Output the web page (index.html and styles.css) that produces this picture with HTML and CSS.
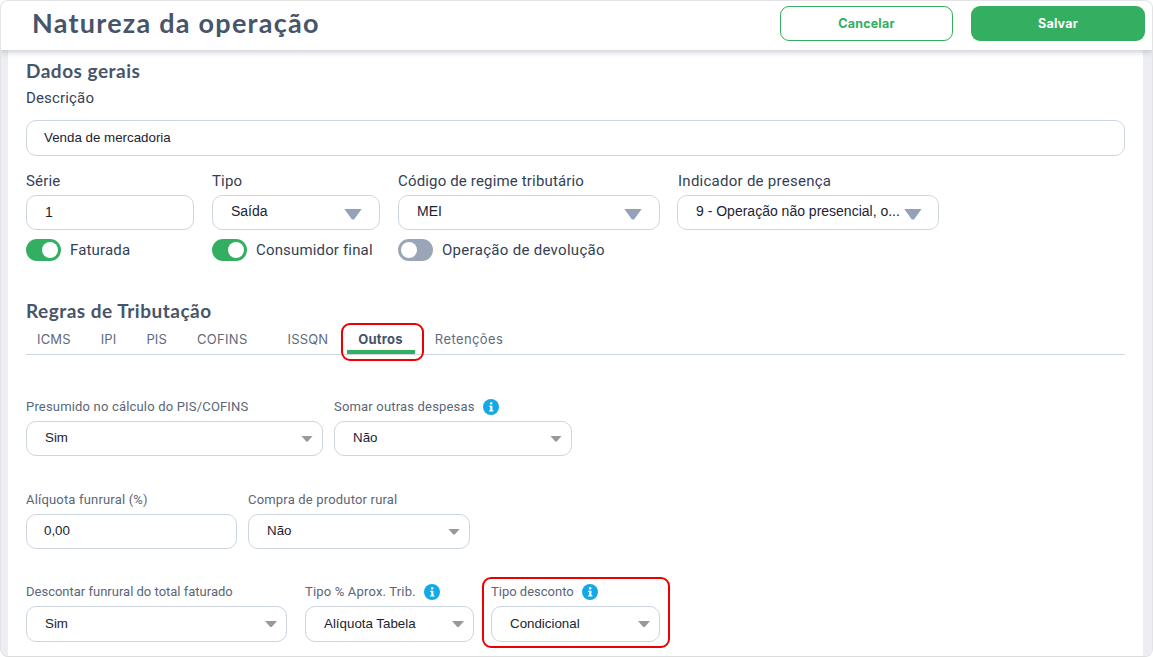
FILE: index.html
```html
<!DOCTYPE html>
<html lang="pt-BR">
<head>
<meta charset="utf-8">
<title>Natureza da operação</title>
<link rel="stylesheet" href="styles.css">
</head>
<body>
<div class="window">
  <header class="topbar">
    <h1 class="title">Natureza da operação</h1>
    <div class="actions">
      <button class="btn btn-outline">Cancelar</button>
      <button class="btn btn-solid">Salvar</button>
    </div>
  </header>
  <main class="page">
    <section class="card">
      <h2 class="heading">Dados gerais</h2>
      <label class="big-label desc-label">Descrição</label>
      <div class="box desc-box"><span class="value">Venda de mercadoria</span></div>

      <div class="general-grid">
        <div class="field">
          <label class="big-label">Série</label>
          <div class="box serie-box"><span class="value">1</span></div>
        </div>
        <div class="field">
          <label class="big-label">Tipo</label>
          <div class="box"><span class="value">Saída</span><i class="caret-big"></i></div>
        </div>
        <div class="field">
          <label class="big-label">Código de regime tributário</label>
          <div class="box"><span class="value">MEI</span><i class="caret-big"></i></div>
        </div>
        <div class="field">
          <label class="big-label">Indicador de presença</label>
          <div class="box"><span class="value">9 - Operação não presencial, o...</span><i class="caret-big"></i></div>
        </div>
      </div>

      <div class="toggle-grid">
        <div class="toggle-item"><span class="toggle on"><b></b></span><span class="big-label">Faturada</span></div>
        <div class="toggle-item"><span class="toggle on"><b></b></span><span class="big-label">Consumidor final</span></div>
        <div class="toggle-item"><span class="toggle"><b></b></span><span class="big-label">Operação de devolução</span></div>
      </div>

      <h2 class="heading rules-heading">Regras de Tributação</h2>
      <nav class="tabs">
        <span class="tab t-icms">ICMS</span>
        <span class="tab t-ipi">IPI</span>
        <span class="tab t-pis">PIS</span>
        <span class="tab t-cofins">COFINS</span>
        <span class="tab t-issqn">ISSQN</span>
        <span class="tab active">Outros</span>
        <span class="tab t-ret">Retenções</span>
      </nav>

      <div class="row row-a">
        <div class="field">
          <label class="small-label">Presumido no cálculo do PIS/COFINS</label>
          <div class="box"><span class="value">Sim</span><i class="caret"></i></div>
        </div>
        <div class="field">
          <label class="small-label">Somar outras despesas
            <svg class="info" viewBox="0 0 16 16"><circle cx="8" cy="8" r="8"/><rect x="7" y="3.2" width="2.4" height="2.2" rx=".6" class="info-i"/><path d="M6.2 6.8h3.2v4.4h1v1.3H6.2v-1.3h1V8.1h-1z" class="info-i"/></svg>
          </label>
          <div class="box"><span class="value">Não</span><i class="caret"></i></div>
        </div>
      </div>

      <div class="row row-b">
        <div class="field">
          <label class="small-label">Alíquota funrural (%)</label>
          <div class="box"><span class="value">0,00</span></div>
        </div>
        <div class="field">
          <label class="small-label">Compra de produtor rural</label>
          <div class="box"><span class="value">Não</span><i class="caret"></i></div>
        </div>
      </div>

      <div class="row row-c">
        <div class="field">
          <label class="small-label">Descontar funrural do total faturado</label>
          <div class="box"><span class="value">Sim</span><i class="caret"></i></div>
        </div>
        <div class="field">
          <label class="small-label">Tipo % Aprox. Trib.
            <svg class="info" viewBox="0 0 16 16"><circle cx="8" cy="8" r="8"/><rect x="7" y="3.2" width="2.4" height="2.2" rx=".6" class="info-i"/><path d="M6.2 6.8h3.2v4.4h1v1.3H6.2v-1.3h1V8.1h-1z" class="info-i"/></svg>
          </label>
          <div class="box"><span class="value">Alíquota Tabela</span><i class="caret"></i></div>
        </div>
        <div class="field marked">
          <label class="small-label">Tipo desconto
            <svg class="info" viewBox="0 0 16 16"><circle cx="8" cy="8" r="8"/><rect x="7" y="3.2" width="2.4" height="2.2" rx=".6" class="info-i"/><path d="M6.2 6.8h3.2v4.4h1v1.3H6.2v-1.3h1V8.1h-1z" class="info-i"/></svg>
          </label>
          <div class="box"><span class="value">Condicional</span><i class="caret"></i></div>
        </div>
      </div>
    </section>
  </main>
</div>
</body>
</html>
```
FILE: styles.css
```css
* { box-sizing: border-box; }
html, body { margin: 0; height: 100%; overflow: hidden; background: #fff; }
body { font-family: Roboto, "Liberation Sans", sans-serif; color: #334155; }

.window {
  width: 1153px;
  height: 657px;
  display: flex;
  flex-direction: column;
  border: 1px solid #e3e3e3;
  border-bottom-color: #dcdcdc;
  border-radius: 8px;
  overflow: hidden;
}

.topbar {
  height: 49px;
  flex: none;
  display: flex;
  justify-content: space-between;
  align-items: flex-start;
  background: #fff;
  box-shadow: 0 2px 6px rgba(100, 110, 130, .35);
  padding: 5px 7px 0 31px;
  position: relative;
  z-index: 2;
}
.title {
  margin: -1px 0 0;
  font: 700 27px/36px Lato, sans-serif;
  letter-spacing: 1.25px;
  color: #47556a;
}
.actions { display: flex; gap: 18px; }
.btn {
  width: 173px;
  height: 35px;
  border-radius: 9px;
  font: 700 12.5px/1 Inter, sans-serif;
  letter-spacing: .2px;
  padding: 1px 0 0;
}
.btn-outline { background: #fff; color: #34ae60; border: 1px solid #34ae60; }
.btn-solid { width: 174px; background: #34ae60; color: #fff; border: 0; }

.page {
  flex: 1;
  min-height: 0;
  background: #eceef3;
  padding: 0 9px 0 7px;
}
.card {
  height: 100%;
  background: #fff;
  padding: 10px 18px 0;
}

.heading {
  margin: 0;
  font: 700 19px/22px Lato, sans-serif;
  letter-spacing: .5px;
  color: #47556a;
}
.big-label {
  display: block;
  font-size: 15px;
  line-height: 18px;
  letter-spacing: .16px;
  color: #334155;
}
.small-label {
  display: flex;
  align-items: center;
  gap: 8px;
  font-size: 13px;
  line-height: 16px;
  height: 16px;
  letter-spacing: .18px;
  color: #5b6676;
  margin-bottom: 6px;
}
.desc-label { margin-top: 7px; }

.box {
  height: 35px;
  display: flex;
  align-items: center;
  justify-content: space-between;
  padding: 0 14px 0 18px;
  border: 1px solid #cdd5e1;
  border-radius: 10px;
  background: #fff;
}
.value {
  font: 13.33px/1 "Liberation Sans", Arial, sans-serif;
  color: #1c2333;
  white-space: nowrap;
}
.desc-box { height: 36px; margin-top: 13px; padding-left: 17px; }
.serie-box { margin-top: 1px; }

.caret-big {
  width: 18px;
  height: 11px;
  flex: none;
  margin: 3px 3px 0 0;
  background: #94a1b8;
  clip-path: polygon(0 0, 100% 0, 56% 100%, 44% 100%);
}
.caret {
  width: 12px;
  height: 6px;
  flex: none;
  background: #999;
  clip-path: polygon(0 0, 100% 0, 56% 100%, 44% 100%);
  margin-right: -5px;
}

.general-grid {
  display: grid;
  grid-template-columns: 168px 168px 262px 262px;
  column-gap: 18px;
  margin-top: 16px;
}
.general-grid .field:last-child { margin: 0 1px 0 -1px; }
.general-grid .field:last-child .big-label { padding-left: 1px; letter-spacing: .26px; }
.general-grid .big-label { margin-bottom: 5px; }
.general-grid .value { font-size: 14px; margin: 0 4px 4px 0; }
.general-grid .serie-box .value { margin-bottom: 2px; }

.toggle-grid {
  display: grid;
  grid-template-columns: 168px 168px 262px;
  column-gap: 18px;
  margin-top: 9px;
}
.toggle-item { display: flex; align-items: center; gap: 9px; height: 22px; }
.toggle-item:last-child .big-label { letter-spacing: .3px; }
.toggle {
  width: 35px;
  height: 22px;
  flex: none;
  border-radius: 11px;
  background: #9aa5b8;
  padding: 3px;
  display: flex;
}
.toggle.on { background: #34ae60; justify-content: flex-end; }
.toggle b { width: 16px; height: 16px; border-radius: 50%; background: #fff; }

.rules-heading { margin-top: 39px; }

.tabs {
  display: flex;
  align-items: flex-start;
  height: 32px;
  margin-top: 1px;
  border-bottom: 1px solid #cdd5e1;
  font: 400 13px/18px Inter, sans-serif;
  letter-spacing: .15px;
  color: #5f6b7c;
}
.tab { display: block; padding-top: 7px; white-space: nowrap; }
.t-icms { margin-left: 11px; }
.t-ipi { margin-left: 30px; }
.t-pis { margin-left: 30px; }
.t-cofins { margin-left: 30px; letter-spacing: .3px; }
.t-issqn { margin-left: 40px; }
.t-ret { margin-left: 32px; letter-spacing: .4px; }
.tab.active {
  position: relative;
  margin-left: 30px;
  font-weight: 700;
  letter-spacing: .25px;
  color: #47556a;
}
.tab.active::before {
  content: "";
  position: absolute;
  left: -11px;
  right: -12px;
  bottom: -6px;
  height: 4px;
  background: #34ae60;
}
.tab.active::after {
  content: "";
  position: absolute;
  left: -17px;
  right: -21px;
  top: 0;
  bottom: -13px;
  border: 2px solid #ee0000;
  border-radius: 9px;
}

.row { display: grid; column-gap: 11px; }
.row-a { grid-template-columns: 297px 238px; margin-top: 44px; }
.row-a .box, .row-b .box { padding-bottom: 2px; }
.row-a .caret, .row-b .caret { margin-top: 2px; }
.row-b { grid-template-columns: 211px 222px; margin-top: 36px; }
.row-b .field:first-child .box { padding-left: 17px; }
.row-c { grid-template-columns: 261px 169px 169px; column-gap: 18px; margin-top: 35px; }
.row-c .box { height: 36px; }
.row-c .small-label { letter-spacing: 0; }
.row-c .field:nth-child(2) .small-label { letter-spacing: .18px; }

.marked { position: relative; margin: 0 1px 0 -1px; }
.marked::after {
  content: "";
  position: absolute;
  inset: -7px -10px -6px -9px;
  border: 2px solid #ee0000;
  border-radius: 9px;
  pointer-events: none;
}

.info { width: 16px; height: 16px; fill: #14a8e6; flex: none; }
.info-i { fill: #fff; }
```
